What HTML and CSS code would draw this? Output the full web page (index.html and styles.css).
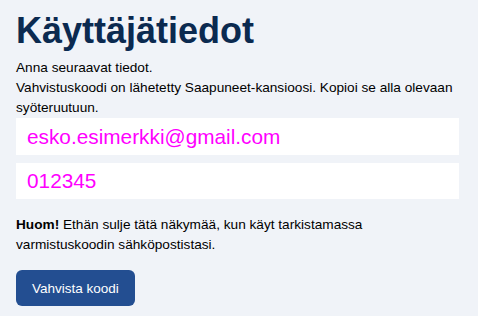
FILE: index.html
```html
<!DOCTYPE html>
<html lang="fi">
<head>
<meta charset="utf-8">
<link rel="stylesheet" href="styles.css">
</head>
<body>
<main class="page">
  <h1 class="title">Käyttäjätiedot</h1>
  <p class="intro">Anna seuraavat tiedot.<br>Vahvistuskoodi on lähetetty Saapuneet-kansioosi. Kopioi se alla olevaan syöteruutuun.</p>
  <div class="fields">
    <div class="field">esko.esimerkki@gmail.com</div>
    <div class="field">012345</div>
  </div>
  <p class="note"><strong>Huom!</strong> Ethän sulje tätä näkymää, kun käyt tarkistamassa varmistuskoodin sähköpostistasi.</p>
  <button class="btn">Vahvista koodi</button>
</main>
</body>
</html>
```

FILE: styles.css
```css
html, body {
  margin: 0;
  background: #f0f3f8;
}
body {
  font-family: "Liberation Sans", Arial, sans-serif;
  color: #000;
}
.page {
  padding: 10px 19px 0 16px;
}
.title {
  margin: 0 0 7px;
  font-size: 36px;
  line-height: 41px;
  font-weight: bold;
  color: #0b2a50;
}
.intro {
  margin: 0;
  font-size: 13.65px;
  line-height: 20px;
}
.fields {
  display: flex;
  flex-direction: column;
  gap: 8px;
}
.field {
  background: #fff;
  height: 37px;
  padding: 0 11px;
  display: flex;
  align-items: center;
  font-size: 20.8px;
  color: #ff00ff;
}
.fields .field + .field {
  height: 36px;
}
.note {
  margin: 16px 0 15px;
  font-size: 13.65px;
  line-height: 20px;
}
.btn {
  display: block;
  height: 36px;
  padding: 0 16px;
  border: 0;
  border-radius: 6px;
  background: #234e91;
  color: #fff;
  font-family: "Liberation Sans", Arial, sans-serif;
  font-size: 13.5px;
}
```
